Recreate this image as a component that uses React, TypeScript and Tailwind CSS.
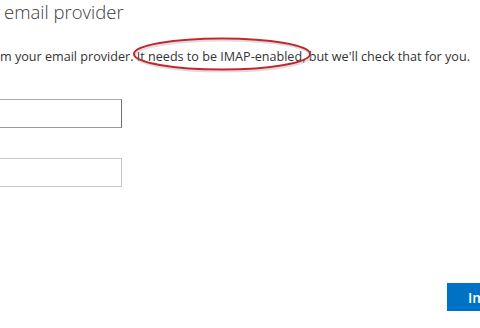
export default function App() {
  return (
    <div className="relative h-[328px] w-[480px] overflow-hidden bg-white text-[#333] [font-family:'Open_Sans',sans-serif]">
      {/* Title */}
      <h1 className="whitespace-nowrap pl-[4px] text-[18.5px] font-light leading-[24px] text-[#3c3c3c]">email provider</h1>

      {/* Description */}
      <p className="mt-[24px] whitespace-nowrap text-[12.6px] leading-[18px]">
        m your email provider.{" "}
        <span className="relative">
          It needs to be IMAP-enabled
          <svg
            className="pointer-events-none absolute left-[-4px] top-[-11px] overflow-visible"
            width="180"
            height="36"
            viewBox="0 0 180 36"
          >
            <ellipse cx="90" cy="19" rx="88" ry="15.5" fill="none" stroke="#bbb" strokeWidth="2" opacity="0.5" />
            <ellipse cx="89" cy="17" rx="88" ry="15.5" fill="none" stroke="#c1272d" strokeWidth="2" />
          </svg>
        </span>
        , but we'll check that for you.
      </p>

      {/* Inputs */}
      <div className="mt-[33px] flex flex-col gap-[30px]">
        <div className="ml-[-10px] h-[29px] w-[132px] border border-[#a9a9a9] border-r-[#707070] border-b-[#999] bg-white" />
        <div className="ml-[-10px] h-[29px] w-[132px] border border-[#c6c6c6] bg-white" />
      </div>

      {/* Footer button */}
      <div className="mt-[96px] flex justify-end">
        <button className="mr-[-40px] h-[28px] w-[73px] bg-[#0072c6] pl-[21px] text-left text-[14px] font-semibold text-white">
          Import
        </button>
      </div>
    </div>
  );
}
